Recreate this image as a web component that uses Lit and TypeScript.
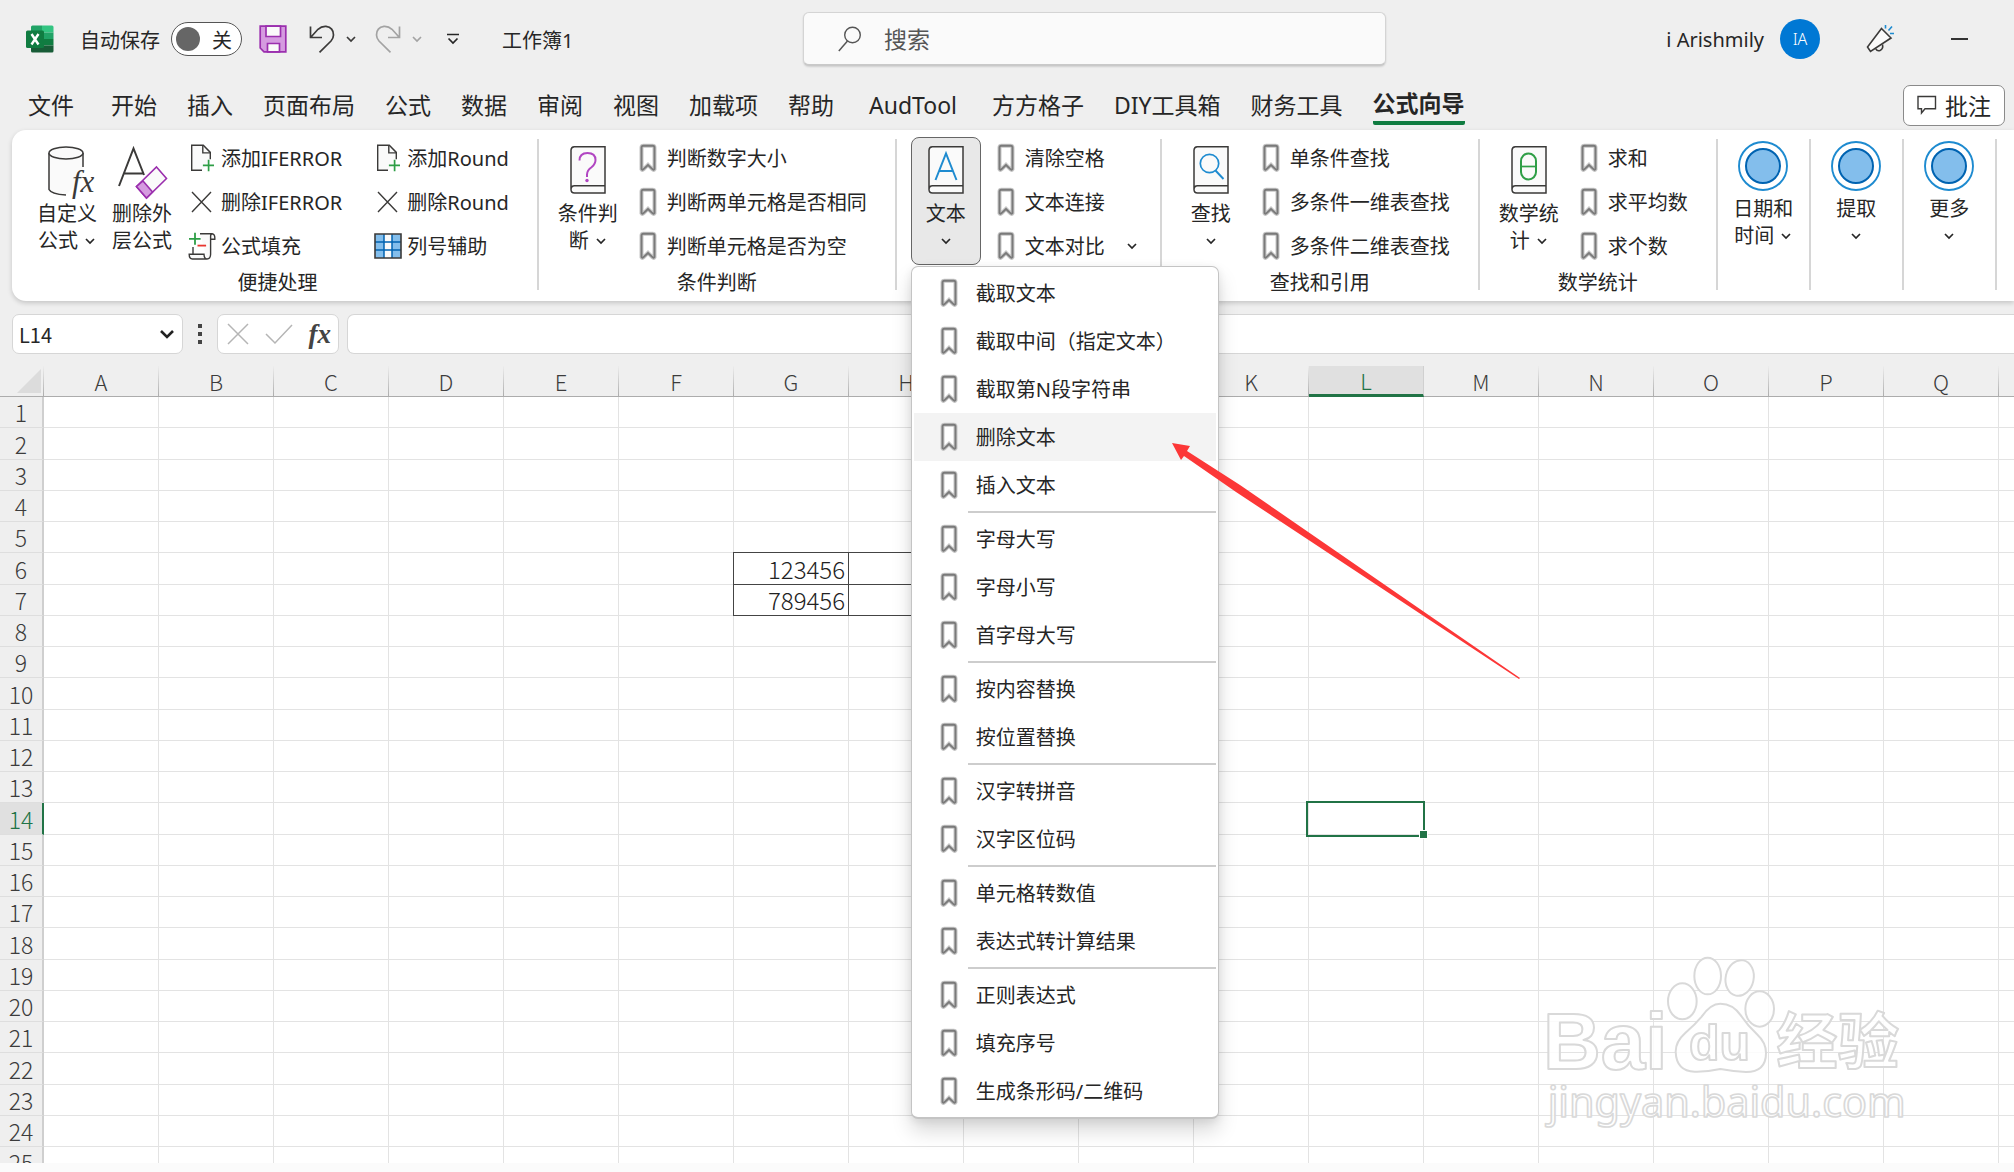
import { LitElement, html, svg, css, nothing, type TemplateResult } from "lit";
import { customElement, property } from "lit/decorators.js";
import { classMap } from "lit/directives/class-map.js";

/* ---------- icons ---------- */

const chevron = (size = 12) => html`<svg class="chev" width=${size} height=${size} viewBox="0 0 12 12" aria-hidden="true">
  <path d="M2 4l4 4 4-4" fill="none" stroke="currentColor" stroke-width="1.7" /></svg>`;

const bookmark = html`<svg width="24" height="28" viewBox="0 0 24 28" aria-hidden="true">
  <path d="M5.5 25.2V3.6Q5.5 1.8 7.3 1.8h9.4q1.8 0 1.8 1.8v21.6q-.8 1.3-2 .2L12 20.8l-4.5 4.6q-1.2 1.1-2-.2z" fill="#fff" stroke="#c6c6c6" stroke-width="4" />
  <path d="M5.5 25V3.6Q5.5 1.7 7.4 1.7h9.2q1.9 0 1.9 1.9V25q-.8 1.3-1.8.4L12 21l-4.700 4.400q-1 .9-1.800-.4z" fill="none" stroke="#7a7a7a" stroke-width="1.900" /></svg>`;

const addDoc = html`<svg width="24" height="28" viewBox="0 0 24 28" aria-hidden="true">
  <path d="M12 26.3H1.7V1.2h11.6l7 7.2v6.8" fill="#fafafa" stroke="#3b3a39" stroke-width="1.4" />
  <path d="M12.8 1.5v7.4h7.4" fill="none" stroke="#3b3a39" stroke-width="1.4" />
  <path d="M18.6 15.8v11.4M12.9 21.4h11.1" stroke="#2e9e46" stroke-width="1.7" /></svg>`;

const cross = html`<svg width="24" height="24" viewBox="0 0 24 24" aria-hidden="true">
  <path d="M2 2l19 20M21 2L2 22" stroke="#3b3a39" stroke-width="1.4" /></svg>`;

const script = html`<svg width="28" height="28" viewBox="0 0 28 28" aria-hidden="true">
  <path d="M12 1.7h11.8q3.4.2 3 5.6h-4.2V22q0 5-3.6 5H4.400Q1.200 27 1.200 22.300H16q.2 4.700 3 4.700M5 15v7M22.600 7.300V4q0-2.300 1.800-2.300" fill="#fafafa" stroke="#3b3a39" stroke-width="1.4" />
  <path d="M7 .8v12M1 6.800h11.600" stroke="#2e9e46" stroke-width="1.800" />
  <path d="M9.500 13.600h8.600" stroke="#e8352e" stroke-width="1.800" /></svg>`;

const tableIcon = html`<svg width="28" height="26" viewBox="0 0 28 26" aria-hidden="true">
  <path d="M1 1h26v24H1z" fill="#83beec" /><path d="M10 1h8v24h-8z" fill="#fafafa" />
  <path d="M10 1v24M18 1v24M1 9h26M1 17h26" stroke="#0063b1" stroke-width="1.500" />
  <path d="M1 1h26v24H1z" fill="none" stroke="#3b3a39" stroke-width="1.600" /></svg>`;

const customFx = html`<svg width="44" height="54" viewBox="0 0 44 54" aria-hidden="true">
  <path d="M4 7v36.500q3 5 17 5.300L38 30V7z" fill="#fafafa" />
  <path d="M4 7v36.500q2 4.500 17 5.500M38 7v14" fill="none" stroke="#3b3a39" stroke-width="1.500" />
  <ellipse cx="21" cy="7" rx="17" ry="6" fill="#fafafa" stroke="#3b3a39" stroke-width="1.500" />
  <text x="27" y="46" font-family="Liberation Serif, serif" font-style="italic" font-size="31" fill="#3b3a39">fx</text></svg>`;

const eraser = html`<svg width="52" height="54" viewBox="0 0 52 54" aria-hidden="true">
  <path d="M3 40L17.500 2.500 28 29M8.500 27.500H28" fill="none" stroke="#3b3a39" stroke-width="2" />
  <path d="M40.500 21l10 11.500-20 19.500-10-11.500z" fill="#fafafa" stroke="#9b2fae" stroke-width="1.600" />
  <path d="M27 35l9.500 11-6 6-10-11.500z" fill="#d59be0" stroke="#9b2fae" stroke-width="1.600" /></svg>`;

const book = (mark: TemplateResult) => html`<svg width="36" height="50" viewBox="0 0 36 50" aria-hidden="true">
  <path d="M1 43.500V4q.3-3 3.300-3.200H35V47H4.500Q1 47 1 43.500q.2-3.700 3.500-3.700H35" fill="#fafafa" stroke="#3b3a39" stroke-width="1.500" />${mark}</svg>`;

const bookQuestion = book(svg`<path d="M9.500 14.500q0-7.500 8-7.500t8 7q0 4-4 7.200-4.500 3.300-4.500 7.300v2.500" fill="none" stroke="#b146c2" stroke-width="2" /><circle cx="17" cy="34.500" r="1.700" fill="#b146c2" />` as any);
const bookLetter = book(svg`<path d="M7.500 34L18 7.500 28.500 34M11.200 25h13.700" fill="none" stroke="#1e8bd0" stroke-width="2" />` as any);
const bookFind = book(svg`<circle cx="16.500" cy="17.500" r="9.200" fill="none" stroke="#1e8bd0" stroke-width="1.700" /><path d="M22.500 24.500l8 8.500" stroke="#1e8bd0" stroke-width="1.900" />` as any);
const bookTheta = book(svg`<rect x="10" y="7.500" width="15" height="26" rx="7.500" fill="none" stroke="#2e9e46" stroke-width="2" /><path d="M10 20.500h15" stroke="#2e9e46" stroke-width="1.700" />` as any);

const disc = html`<svg width="50" height="50" viewBox="0 0 50 50" aria-hidden="true">
  <circle cx="25" cy="25" r="24" fill="#fff" stroke="#1e8bd0" stroke-width="1.900" />
  <circle cx="25" cy="25" r="17" fill="#83beec" stroke="#0063b1" stroke-width="2" /></svg>`;

const excelLogo = html`<svg width="28" height="28" viewBox="0 0 28 28" aria-hidden="true">
  <path d="M5 2q0-1.500 1.500-1.500H16v7H5z" fill="#21a366" /><path d="M16 .5h10q1.500 0 1.500 1.500v5.500H16z" fill="#33c481" />
  <path d="M5 7.500h11V14H5z" fill="#107c41" /><path d="M16 7.500h11.500V14H16z" fill="#21a366" />
  <path d="M16 14h11.500v6.500H16z" fill="#107c41" /><path d="M5 14h11v6.500h11.500V26q0 1.500-1.500 1.500H6.500Q5 27.500 5 26z" fill="#185c37" />
  <rect x="0" y="5.500" width="18" height="17.500" rx="1.500" fill="#107c41" />
  <path d="M5.500 9l7 10.500M12.500 9l-7 10.500" stroke="#fff" stroke-width="2.400" /></svg>`;

const saveIcon = html`<svg width="28" height="28" viewBox="0 0 28 28" aria-hidden="true">
  <path d="M1.200 1.200h25.600v25.600H5L1.200 23z" fill="#d59be0" stroke="#9b2fae" stroke-width="1.700" />
  <path d="M7 1.200h14.500V11.500H7zM8.500 26.800V18.500H20.500v8.300z" fill="#fafafa" stroke="#9b2fae" stroke-width="1.700" /></svg>`;

const undoIcon = html`<svg width="26" height="28" viewBox="0 0 26 28" aria-hidden="true">
  <path d="M1.500 1.500v11h11.500M1.800 12.200L9 4.300Q12.500 1 17 1.300q7.500 1 7.500 8.700 0 3-2.500 6L10.500 27.300" fill="none" stroke="currentColor" stroke-width="1.700" /></svg>`;

const redoIcon = html`<svg width="26" height="28" viewBox="0 0 26 28" aria-hidden="true">
  <path d="M24.500 1.500v11H13M24.200 12.200L17 4.300Q13.500 1 9 1.300 1.500 2.300 1.500 10q0 3 2.500 6l11.500 11.300" fill="none" stroke="currentColor" stroke-width="1.700" /></svg>`;

const moreIcon = html`<svg width="14" height="12" viewBox="0 0 14 12" aria-hidden="true">
  <path d="M1 1.500h12M2.500 5.500L7 10l4.500-4.500" fill="none" stroke="#262626" stroke-width="1.700" /></svg>`;

const searchIcon = html`<svg width="24" height="26" viewBox="0 0 24 26" aria-hidden="true">
  <circle cx="14.500" cy="9" r="7.800" fill="none" stroke="#555" stroke-width="1.400" /><path d="M9.500 15L.8 25" stroke="#555" stroke-width="1.500" /></svg>`;

const horn = html`<svg width="28" height="28" viewBox="0 0 28 28" aria-hidden="true">
  <path d="M15.500 3.500L25 13 4.500 26.500 1.500 22z" fill="#fafafa" stroke="#3b3a39" stroke-width="1.600" />
  <path d="M9.500 23.500q1.500 3 4.500 2 3.500-1.500 2.500-6" fill="none" stroke="#3b3a39" stroke-width="1.600" />
  <path d="M19.500 0v3.500M26 1.500L22.500 5.500M24 8.500h4" stroke="#1e8bd0" stroke-width="1.600" /></svg>`;

const noteIcon = html`<svg width="20" height="20" viewBox="0 0 20 20" aria-hidden="true">
  <path d="M1 1.500h17.500v12.300H8L4.500 18v-4.200H1z" fill="none" stroke="#3b3a39" stroke-width="1.400" /></svg>`;

/* ---------- data ---------- */

type Small = { label: string; icon: TemplateResult; drop?: boolean };
type Big = { lines: string[]; icon: TemplateResult; drop?: boolean; open?: boolean };
type Group = { label?: string; big: Big[]; cols: Small[][] };

const mark = (...labels: string[]): Small[] => labels.map((label) => ({ label, icon: bookmark }));

const GROUPS: Group[] = [
  {
    label: "便捷处理",
    big: [
      { lines: ["自定义", "公式"], icon: customFx, drop: true },
      { lines: ["删除外", "层公式"], icon: eraser },
    ],
    cols: [
      [
        { label: "添加IFERROR", icon: addDoc },
        { label: "删除IFERROR", icon: cross },
        { label: "公式填充", icon: script },
      ],
      [
        { label: "添加Round", icon: addDoc },
        { label: "删除Round", icon: cross },
        { label: "列号辅助", icon: tableIcon },
      ],
    ],
  },
  {
    label: "条件判断",
    big: [{ lines: ["条件判", "断"], icon: bookQuestion, drop: true }],
    cols: [mark("判断数字大小", "判断两单元格是否相同", "判断单元格是否为空")],
  },
  {
    label: "",
    big: [{ lines: ["文本", ""], icon: bookLetter, drop: true, open: true }],
    cols: [[...mark("清除空格", "文本连接"), { label: "文本对比", icon: bookmark, drop: true }]],
  },
  {
    label: "查找和引用",
    big: [{ lines: ["查找", ""], icon: bookFind, drop: true }],
    cols: [mark("单条件查找", "多条件一维表查找", "多条件二维表查找")],
  },
  {
    label: "数学统计",
    big: [{ lines: ["数学统", "计"], icon: bookTheta, drop: true }],
    cols: [mark("求和", "求平均数", "求个数")],
  },
  { big: [{ lines: ["日期和", "时间"], icon: disc, drop: true }], cols: [] },
  { big: [{ lines: ["提取", ""], icon: disc, drop: true }], cols: [] },
  { big: [{ lines: ["更多", ""], icon: disc, drop: true }], cols: [] },
];

const MENU: string[][] = [
  ["截取文本", "截取中间（指定文本）", "截取第N段字符串", "删除文本", "插入文本"],
  ["字母大写", "字母小写", "首字母大写"],
  ["按内容替换", "按位置替换"],
  ["汉字转拼音", "汉字区位码"],
  ["单元格转数值", "表达式转计算结果"],
  ["正则表达式", "填充序号", "生成条形码/二维码"],
];

const TABS = ["文件", "开始", "插入", "页面布局", "公式", "数据", "审阅", "视图", "加载项", "帮助", "AudTool", "方方格子", "DIY工具箱", "财务工具", "公式向导"];

const reset = css`
  * { box-sizing: border-box; }
  button, input { font: inherit; color: inherit; background: none; border: 0; padding: 0; margin: 0; }
  svg { display: block; flex: none; overflow: visible; }
`;

/* ---------- title bar and tabs ---------- */

@customElement("title-bar")
class TitleBar extends LitElement {
  static styles = [reset, css`
    :host { display: block; }
    .bar { display: grid; grid-template-columns: minmax(0, 803fr) minmax(0, 583fr) minmax(0, 628fr); align-items: center; height: 78px; font-size: 20px; }
    .left { display: flex; align-items: center; padding-left: 26px; }
    .auto { display: flex; align-items: center; gap: 11px; margin-left: 26px; }
    .switch { display: flex; align-items: center; justify-content: space-between; width: 71px; height: 34px; padding: 0 9px 0 4px; border: 1px solid #555; border-radius: 17px; background: #fff; }
    .switch input { appearance: none; width: 24px; height: 24px; border-radius: 50%; background: #666; }
    .save { margin-left: 17px; }
    .undo, .redo { display: flex; align-items: center; gap: 10px; margin-left: 22px; color: #3b3a39; }
    .redo { color: #a3a3a3; margin-left: 18px; }
    .more { margin-left: 23px; }
    .name { margin-left: 42px; }
    .search { display: flex; align-items: center; gap: 22px; height: 54px; padding-left: 34px; background: #fafafa; border: 1px solid #d4d4d4; border-bottom: 2px solid #c9c9c9; border-radius: 6px; box-shadow: 0 1px 2px #0002; font-size: 23px; }
    .search input { flex: 1; min-width: 0; outline: 0; }
    .search input::placeholder { color: #555; opacity: 1; }
    .right { display: flex; align-items: center; justify-content: flex-end; padding-right: 46px; }
    .avatar { display: grid; place-items: center; width: 40px; height: 40px; margin: 0 46px 0 16px; border-radius: 50%; background: #0078d4; color: #fff; font-size: 16px; font-weight: 300; }
    .min { width: 17px; height: 20px; margin-left: 57px; display: grid; align-items: center; }
    .min span { height: 2px; background: #333; }
    .tabs { display: flex; align-items: center; height: 52px; padding: 2px 9px 0 13px; font-size: 23px; }
    .tab { height: 40px; padding: 0 15px; white-space: nowrap; line-height: 36px; }
    .tab.file { margin-right: 7px; }
    .tab.latin { padding: 0 20px; }
    .tab.active { font-weight: 700; }
    .tab.active span { display: block; border-bottom: 4px solid #107c41; border-radius: 2px; }
    .note { display: flex; align-items: center; gap: 8px; height: 41px; margin-left: auto; padding: 0 13px; background: #fff; border: 1px solid #8a8a8a; border-radius: 7px; white-space: nowrap; }
  `];

  render() {
    return html`
      <header class="bar">
        <div class="left">
          ${excelLogo}
          <label class="auto">自动保存<span class="switch"><input type="checkbox" role="switch" />关</span></label>
          <button class="save" aria-label="保存">${saveIcon}</button>
          <button class="undo" aria-label="撤消">${undoIcon}${chevron()}</button>
          <button class="redo" aria-label="恢复">${redoIcon}${chevron()}</button>
          <button class="more" aria-label="自定义快速访问工具栏">${moreIcon}</button>
          <span class="name">工作簿1</span>
        </div>
        <label class="search">${searchIcon}<input type="search" placeholder="搜索" aria-label="搜索" /></label>
        <div class="right">
          <span>i Arishmily</span><span class="avatar">IA</span>
          <button aria-label="即将推出">${horn}</button>
          <button class="min" aria-label="最小化"><span></span></button>
        </div>
      </header>
      <nav class="tabs">
        ${TABS.map((t, i) => html`<button class=${classMap({ tab: true, file: i === 0, latin: /^[A-Za-z]+$/.test(t), active: t === "公式向导" })}><span>${t}</span></button>`)}
        <button class="note">${noteIcon}批注</button>
      </nav>`;
  }
}

/* ---------- drop-down menu ---------- */

@customElement("text-menu")
class TextMenu extends LitElement {
  static styles = [reset, css`
    :host { display: block; width: 308px; padding: 2px; background: #fff; border: 1px solid #c4c4c4; border-bottom-width: 2px; border-radius: 7px; box-shadow: 0 12px 20px #00000026, 0 2px 8px #00000014; }
    .item { display: flex; align-items: center; gap: 15px; width: 100%; height: 48px; padding: 0 0 1px 23px; text-align: left; font-size: 20px; white-space: nowrap; }
    .item.hot { background: #f3f3f3; }
    .line { height: 2px; margin: 2px 0 2px 54px; border: 0; background: #cdcdcd; }
  `];

  render() {
    return MENU.map((part, i) => html`
      ${i ? html`<hr class="line" />` : nothing}
      ${part.map((t) => html`<button role="menuitem" class=${classMap({ item: true, hot: t === "删除文本" })}>${bookmark}<span>${t}</span></button>`)}`);
  }
}

/* ---------- ribbon ---------- */

@customElement("ribbon-group")
class RibbonGroup extends LitElement {
  @property({ attribute: false }) group!: Group;

  static styles = [reset, css`
    :host { display: flex; flex: none; }
    .group { display: flex; flex-direction: column; padding-top: 6px; font-size: 20px; }
    .group.plain { padding: 5px 5px 0; }
    .body { display: flex; gap: 13px; height: 132px; padding: 0 28px 0 14px; }
    .plain .body { padding: 0; }
    .bigs { display: flex; gap: 5px; padding: 1px 0 3px; }
    .slot { position: relative; display: flex; }
    .big { display: flex; flex-direction: column; align-items: center; width: 70px; padding-top: 9px; border-radius: 8px; line-height: 27px; white-space: nowrap; }
    .plain .big { width: 81px; padding-top: 5px; }
    .big.open { padding-top: 8px; background: #e8e8e8; border: 1px solid #666; }
    .pic { display: flex; justify-content: center; height: 50px; margin-bottom: 4px; }
    .line { display: flex; align-items: center; gap: 6px; height: 27px; }
    .cols { display: flex; gap: 34px; }
    .small { display: flex; align-items: center; gap: 7px; height: 44px; white-space: nowrap; }
    .text { padding-bottom: 2px; }
    .icon { display: flex; justify-content: center; width: 24px; }
    .small .chev { margin: 0 -6px 0 14px; }
    .caption { text-align: center; line-height: 30px; }
    .rule { width: 2px; margin: 9px 0 11px; background: #d6d6d6; }
    text-menu { position: absolute; left: 0; top: 129px; z-index: 5; }
  `];

  render() {
    const g = this.group;
    return html`
      <section class=${classMap({ group: true, plain: g.label === undefined })}>
        <div class="body">
          <div class="bigs">
            ${g.big.map((b) => html`<div class="slot">
              <button class=${classMap({ big: true, open: !!b.open })}>
                <span class="pic">${b.icon}</span>
                ${b.lines.map((l, i) => html`<span class="line">${l}${i && b.drop ? chevron() : nothing}</span>`)}
              </button>
              ${b.open ? html`<text-menu role="menu"></text-menu>` : nothing}
            </div>`)}
          </div>
          ${g.cols.length ? html`<div class="cols">
            ${g.cols.map((c) => html`<div>${c.map((s) => html`<button class="small"><span class="icon">${s.icon}</span><span class="text">${s.label}</span>${s.drop ? chevron() : nothing}</button>`)}</div>`)}
          </div>` : nothing}
        </div>
        ${g.label ? html`<div class="caption">${g.label}</div>` : nothing}
      </section>
      <div class="rule"></div>`;
  }
}

/* ---------- formula bar ---------- */

@customElement("formula-bar")
class FormulaBar extends LitElement {
  static styles = [reset, css`
    :host { display: flex; align-items: center; height: 40px; margin: 13px 0 12px 12px; font-size: 20px; }
    .box { display: flex; align-items: center; height: 40px; background: #fff; border: 1px solid #d6d6d6; border-radius: 7px; }
    .ref { width: 171px; padding: 0 6px; font-family: "Noto Sans CJK SC", sans-serif; }
    .ref input { flex: 1; min-width: 0; outline: 0; }
    .dots { display: grid; gap: 4px; margin: 0 15px; }
    .dots i { width: 4px; height: 4px; background: #444; }
    .tools { width: 122px; justify-content: space-between; padding: 0 7px 0 9px; }
    .fx { font: italic 700 27px/36px "Liberation Serif", serif; color: #444; }
    .text { flex: 1; margin-left: 8px; padding: 0 10px; border-right: 0; border-radius: 7px 0 0 7px; min-width: 0; outline: 0; }
  `];

  render() {
    return html`
      <div class="box ref"><input aria-label="名称框" .value=${"L14"} />
        <button aria-label="名称列表"><svg width="18" height="18" viewBox="0 0 18 18"><path d="M3 6l6 6 6-6" fill="none" stroke="#222" stroke-width="2.600" /></svg></button></div>
      <span class="dots"><i></i><i></i><i></i></span>
      <div class="box tools">
        <button aria-label="取消"><svg width="22" height="22" viewBox="0 0 22 22"><path d="M1 1l20 20M21 1L1 21" stroke="#b5b5b5" stroke-width="1.500" /></svg></button>
        <button aria-label="输入"><svg width="28" height="20" viewBox="0 0 28 20"><path d="M1 10l9 9L27 1" fill="none" stroke="#b5b5b5" stroke-width="1.500" /></svg></button>
        <button class="fx" aria-label="插入函数">fx</button>
      </div>
      <input class="box text" aria-label="编辑栏" />`;
  }
}

/* ---------- worksheet ---------- */

const COLS = [..."ABCDEFGHIJKLMNOPQRSTUVWX"];
const ROWS = Array.from({ length: 40 }, (_, i) => i + 1);
const VALUES: Record<string, string> = { G6: "123456", H6: "", G7: "789456", H7: "" };

@customElement("work-sheet")
class WorkSheet extends LitElement {
  static styles = [reset, css`
    :host { display: block; position: relative; flex: 1; min-height: 0; overflow: hidden; background: #fff; font-family: "Noto Sans CJK SC", sans-serif; font-size: 22px; font-weight: 300; color: #3c3c3c; }
    table { table-layout: fixed; border-collapse: separate; border-spacing: 0; width: 2804px; }
    .corner { width: 44px; }
    .col { width: 115px; }
    tr { height: 31px; }
    tbody tr:nth-child(4n + 2) { height: 32px; }
    th, td { padding: 0; line-height: 30px; }
    th { font-weight: 300; background: #efefef; text-align: center; }
    thead th { border-bottom: 1px solid #ababab; border-right: 1px solid; border-image: linear-gradient(#efefef, #ababab) 1; }
    thead th.on, tbody th.on { background: #e0e0e0; color: #217346; }
    thead th.on { border-image: none; border-right-color: #d0d0d0; border-bottom: 3px solid #217346; line-height: 28px; }
    thead .corner svg { margin: 0 0 0 17px; }
    tbody th { border-right: 2px solid #cfcfcf; border-bottom: 1px solid #dedede; font-size: 23px; }
    tbody th.on { border-right-color: #217346; }
    td { position: relative; border-right: 1px solid #e3e3e3; border-bottom: 1px solid #e3e3e3; text-align: right; padding-right: 3px; }
    td.framed { border-color: #444; color: #222; font-size: 24px; }
    .framed::before { content: ""; position: absolute; inset: -1px; border: 1px solid #444; }
    .sel::before { content: ""; position: absolute; inset: -2px -2px -3px -3px; border: 2px solid #217346; z-index: 1; }
    .sel::after { content: ""; position: absolute; right: -4px; bottom: -4px; width: 7px; height: 7px; background: #217346; outline: 1px solid #fff; z-index: 2; }
    .logo { position: absolute; right: 104px; bottom: 30px; z-index: 3; }
  `];

  render() {
    return html`
      <table>
        <thead><tr>
          <th class="corner" aria-label="全选"><svg width="24" height="24" viewBox="0 0 24 24"><path d="M24 0v24H0z" fill="#dcdcdc" /></svg></th>
          ${COLS.map((c) => html`<th scope="col" class=${classMap({ col: true, on: c === "L" })}>${c}</th>`)}
        </tr></thead>
        <tbody>
          ${ROWS.map((r) => html`<tr><th scope="row" class=${classMap({ on: r === 14 })}>${r}</th>
            ${COLS.map((c) => html`<td class=${classMap({ framed: c + r in VALUES, sel: c + r === "L14" })}>${VALUES[c + r] ?? ""}</td>`)}</tr>`)}
        </tbody>
      </table>
      <svg class="logo" width="367" height="180" viewBox="130 70 1101 540" aria-hidden="true">
        <g fill="#fff" fill-opacity=".85" stroke="#d9d9d9" stroke-width="6" stroke-linejoin="round" font-weight="700">
          <text x="130" y="417" font-family="Liberation Sans, sans-serif" font-size="240">Bai</text>
          <ellipse cx="548" cy="215" rx="43" ry="54" />
          <ellipse cx="624" cy="139" rx="40" ry="55" />
          <ellipse cx="720" cy="145" rx="42" ry="54" transform="rotate(12 720 145)" />
          <ellipse cx="780" cy="238" rx="43" ry="53" />
          <path d="M662 222q38 0 62 36 22 32 48 56 27 25 27 56 0 57-60 57-36-2-77-9-41 9-77 8-55-2-57-60 0-30 28-55 30-26 50-50 26-39 56-39z" />
          <text x="568" y="392" font-family="Liberation Sans, sans-serif" font-size="150">du</text>
          <text x="830" y="402" font-family="Noto Sans CJK SC, sans-serif" font-size="184">经验</text>
          <text x="144" y="562" font-family="Noto Sans, sans-serif" font-size="124" font-weight="400" stroke-width="5">jingyan.baidu.com</text>
        </g>
      </svg>`;
  }
}

/* ---------- page ---------- */

@customElement("app-root")
class AppRoot extends LitElement {
  static styles = [reset, css`
    :host { display: flex; flex-direction: column; position: relative; height: 100vh; overflow: hidden; background: #efefef; color: #262626; font-family: "Noto Sans", "Noto Sans CJK SC", sans-serif; }
    .ribbon { display: flex; min-height: 171px; margin-left: 12px; padding-left: 6px; background: #fff; border-radius: 14px 0 0 14px; box-shadow: 0 2px 5px #0000002e; position: relative; z-index: 2; }
    .foot { height: 9px; background: #fbfbfb; }
    .arrow { position: absolute; left: 1172px; top: 443px; z-index: 6; pointer-events: none; }
  `];

  render() {
    return html`
      <title-bar></title-bar>
      <div class="ribbon">${GROUPS.map((g) => html`<ribbon-group .group=${g}></ribbon-group>`)}</div>
      <formula-bar></formula-bar>
      <work-sheet></work-sheet>
      <div class="foot"></div>
      <svg class="arrow" width="348" height="236" viewBox="0 0 348 236" aria-hidden="true">
        <path d="M0 0l18 3-3 5 53 34 280 193-1 1L64 49 12 13l-3 4z" fill="#fc3737" />
      </svg>`;
  }
}
